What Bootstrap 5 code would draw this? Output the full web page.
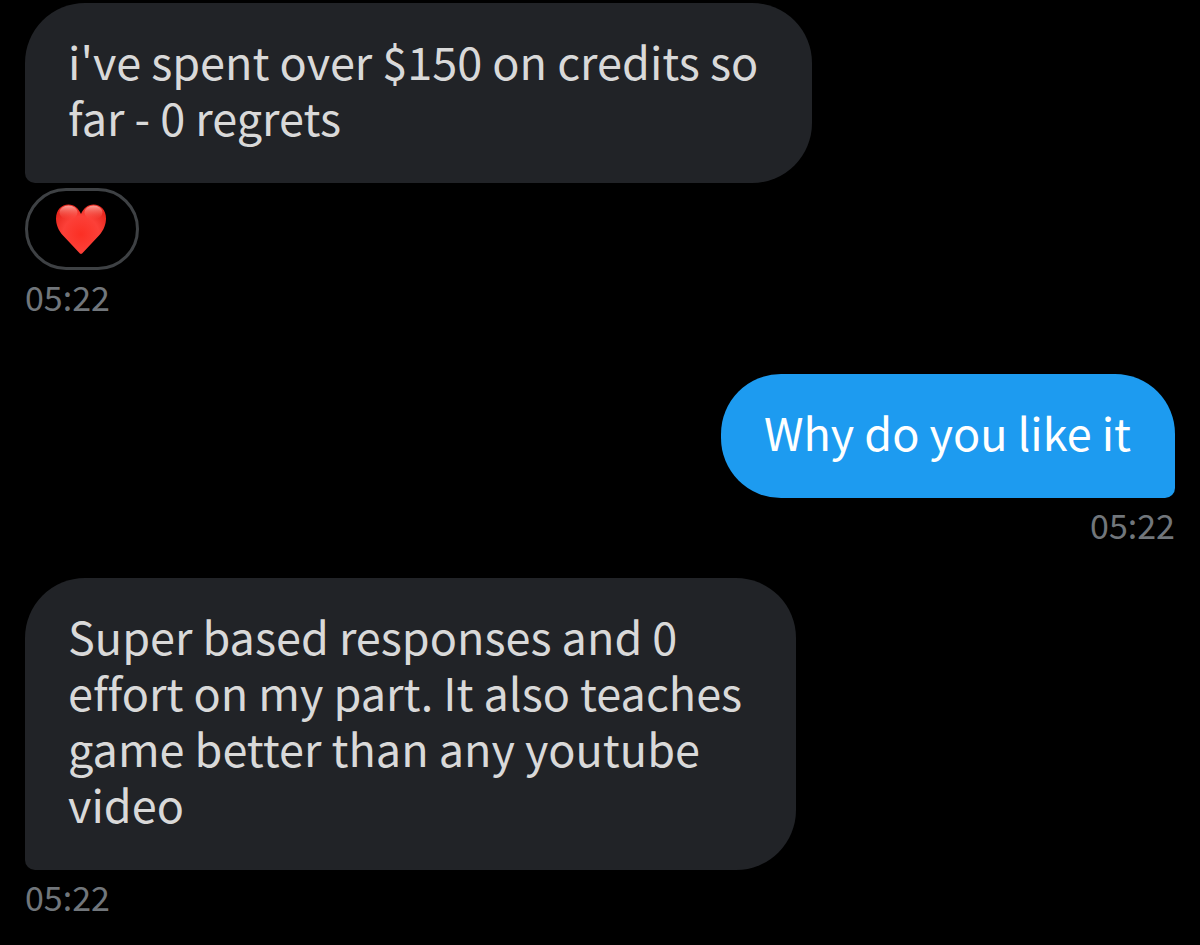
<!DOCTYPE html>
<html lang="en">
<head>
<meta charset="utf-8">
<meta name="viewport" content="width=device-width, initial-scale=1">
<title>Messages</title>
<link href="https://cdn.jsdelivr.net/npm/bootstrap@5.3.0/dist/css/bootstrap.min.css" rel="stylesheet">
<style>
body{background:#000;font-family:"Noto Sans CJK SC","Open Sans",sans-serif;font-variant-ligatures:none}
.chat{padding:3px 25px 24px}
/* break-spaces keeps the space at the end of each line inside the bubble */
.bubble{max-width:100%;padding:30px 44px 38px 43px;font-size:45px;line-height:56px;border-radius:60px;white-space:break-spaces}
.received{border-bottom-left-radius:10px;color:#d9d9d9;background:#212327}
.sent{border-bottom-right-radius:10px;color:#fff;background:#1d9bf0}
.stamp{margin-top:7px;font-size:34px;line-height:40px;color:#71767b}
.reaction{width:114px;height:82px;margin-top:5px;padding:0 3px 0 0;border:3px solid #3e4144;border-radius:41px;background:#000}
.after-long{margin-top:57px}
.after-short{margin-top:33px}
</style>
</head>
<body>
<main class="chat d-flex flex-column">
<article class="d-flex flex-column align-items-start">
<p class="bubble received mb-0">i've spent over $150 on credits so 
far - 0 regrets</p>
<button type="button" class="reaction d-flex align-items-center justify-content-center" aria-label="Heart reaction">
<svg width="52" height="52" viewBox="0 0 52 52" aria-hidden="true">
<defs>
<radialGradient id="body" cx=".5" cy=".6" r=".6"><stop offset="0" stop-color="#fb2f24"/><stop offset=".6" stop-color="#fc4038"/><stop offset="1" stop-color="#e8281f"/></radialGradient>
<linearGradient id="shine" x1="0" y1="0" x2="0" y2="1"><stop offset="0" stop-color="#ffc0b8" stop-opacity=".8"/><stop offset="1" stop-color="#ff5a4c" stop-opacity="0"/></linearGradient>
</defs>
<path d="M26 51Q25 51 23.500 49L8 32.500C3 27 1 21 1 15.500C1 7 6.500 1.500 13.500 1.500C19.500 1.500 23.500 5.500 26 11C28.500 5.500 32.500 1.500 38.500 1.500C45.500 1.500 51 7 51 15.500C51 21 49 27 44 32.500L28.500 49Q27 51 26 51Z" fill="url(#body)"/>
<ellipse cx="13.500" cy="9.500" rx="9" ry="7" fill="url(#shine)"/>
<ellipse cx="38.500" cy="9.500" rx="9" ry="7" fill="url(#shine)"/>
</svg>
</button>
<time class="stamp" datetime="05:22">05:22</time>
</article>
<article class="after-long d-flex flex-column align-items-end">
<p class="bubble sent mb-0">Why do you like it</p>
<time class="stamp" datetime="05:22">05:22</time>
</article>
<article class="after-short d-flex flex-column align-items-start">
<p class="bubble received mb-0">Super based responses and 0 
effort on my part. It also teaches 
game better than any youtube 
video</p>
<time class="stamp" datetime="05:22">05:22</time>
</article>
</main>
<script src="https://cdn.jsdelivr.net/npm/bootstrap@5.3.0/dist/js/bootstrap.bundle.min.js"></script>
</body>
</html>
